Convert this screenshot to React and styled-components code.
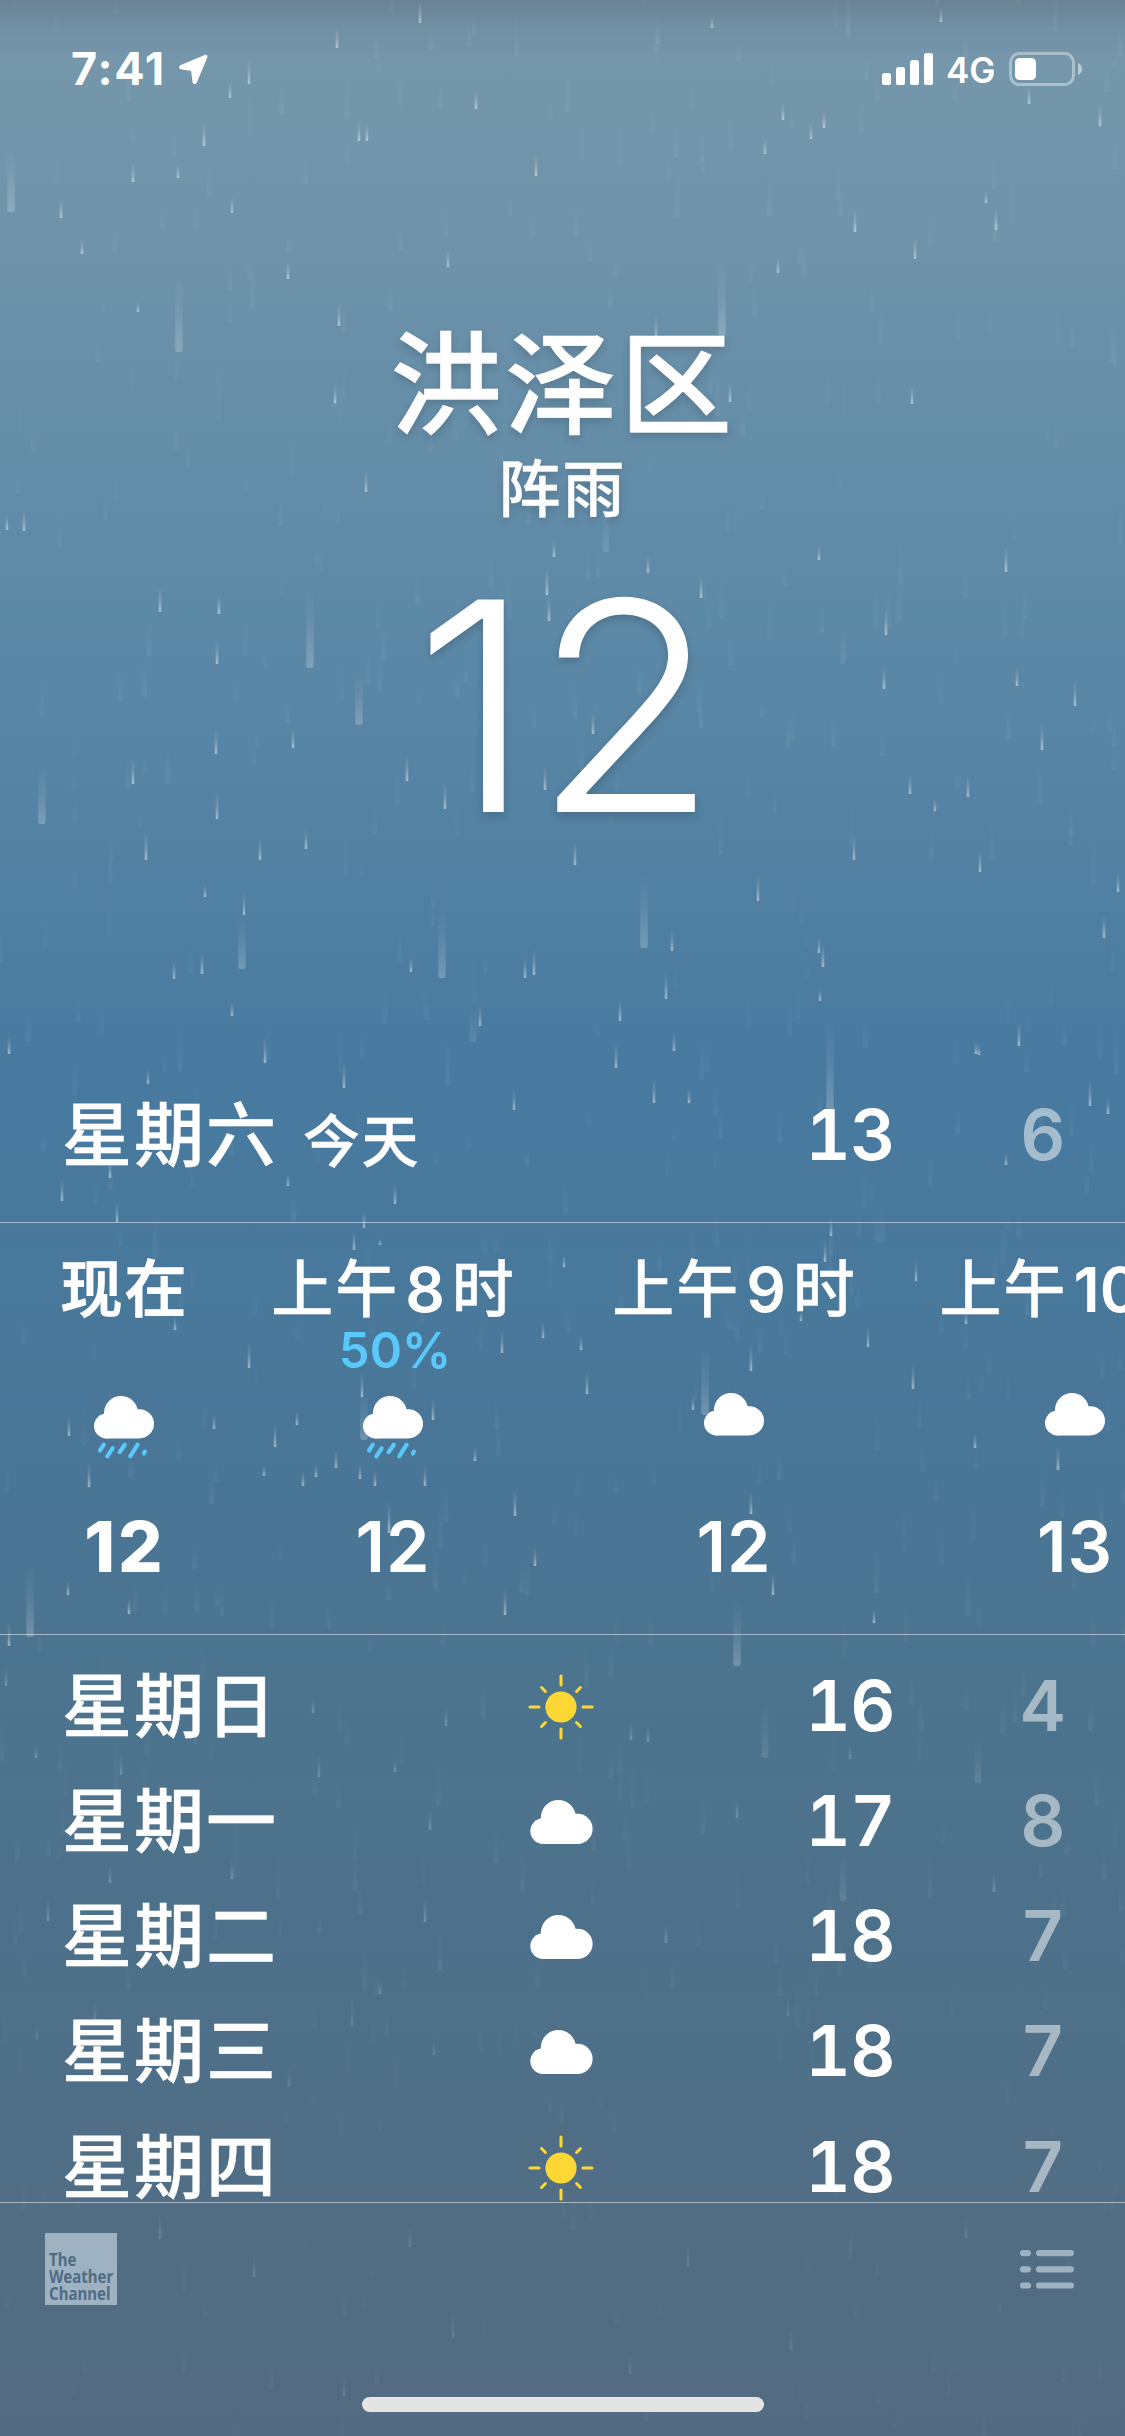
import React from "react";
import styled, { createGlobalStyle } from "styled-components";

const hours = [
   { period: "现在", icon: "rain", temp: 12, now: true },
   { period: "上午", hour: 8, unit: "时", chance: "50%", icon: "rain", temp: 12 },
   { period: "上午", hour: 9, unit: "时", icon: "cloud", temp: 12 },
   { period: "上午", hour: 10, unit: "时", icon: "cloud", temp: 13 },
];

const days = [
   { name: "星期日", icon: "sun", high: 16, low: 4 },
   { name: "星期一", icon: "cloud", high: 17, low: 8 },
   { name: "星期二", icon: "cloud", high: 18, low: 7 },
   { name: "星期三", icon: "cloud", high: 18, low: 7 },
   { name: "星期四", icon: "sun", high: 18, low: 7 },
];

// Big drops close to the camera: x, bottom y, length
const nearDrops = [
   [11, 212, 65], [179, 352, 75], [722, 336, 75], [310, 668, 80], [359, 725, 55],
   [42, 824, 60], [242, 969, 52], [442, 978, 70], [644, 948, 78], [830, 1112, 95],
   [364, 1440, 50], [705, 1415, 70], [30, 1637, 70], [737, 1666, 65],
   [765, 1758, 55], [978, 1783, 45], [843, 1901, 50], [606, 552, 40], [473, 1042, 40],
];

// Thin bright drops: x, bottom y, length
const brightDrops = [
   [420, 23, 22], [337, 48, 20], [712, 28, 12], [941, 22, 15], [249, 84, 24], [230, 98, 16],
   [476, 109, 18], [204, 146, 24], [359, 141, 20], [367, 141, 18], [536, 176, 22], [133, 182, 18],
   [61, 218, 20], [82, 254, 16], [783, 120, 16], [824, 128, 18], [811, 139, 15], [1100, 126, 22],
   [855, 232, 24], [996, 230, 22], [986, 203, 12], [915, 259, 22], [765, 154, 14], [339, 326, 22],
   [448, 267, 18], [288, 279, 18], [232, 213, 16], [1029, 104, 18], [778, 273, 16], [656, 340, 24],
   [178, 178, 14], [138, 312, 10], [730, 402, 20], [912, 404, 20], [24, 531, 20], [7, 530, 16],
   [366, 492, 22], [335, 403, 18], [160, 612, 26], [217, 664, 24], [219, 614, 20], [547, 595, 28],
   [549, 621, 24], [554, 557, 16], [701, 598, 24], [648, 573, 18], [1006, 572, 26], [819, 560, 14],
   [886, 635, 28], [884, 689, 22], [1075, 706, 26], [1042, 750, 26], [1017, 686, 18], [133, 784, 26],
   [216, 754, 24], [217, 819, 26], [293, 748, 20], [407, 781, 26], [445, 809, 26], [545, 790, 24],
   [593, 734, 22], [968, 797, 22], [910, 794, 20], [935, 811, 12], [146, 860, 28], [260, 860, 22],
   [306, 849, 20], [575, 865, 24], [854, 860, 24], [980, 872, 22], [758, 901, 26], [1104, 938, 24],
   [1118, 892, 20], [244, 915, 22], [205, 897, 12], [534, 975, 26], [525, 978, 20], [823, 967, 24],
   [819, 953, 16], [672, 951, 20], [666, 999, 26], [620, 1021, 22], [174, 979, 18], [202, 974, 22],
   [411, 972, 14], [232, 1016, 14], [480, 1026, 20], [820, 1001, 12], [265, 1063, 26], [344, 1088, 26],
   [616, 1068, 24], [1019, 1046, 24], [9, 1054, 18], [674, 1051, 18], [976, 1054, 12], [979, 1055, 10],
   [148, 1084, 14], [654, 1103, 24], [1090, 1106, 26], [1108, 1114, 16], [689, 1103, 14], [514, 1110, 20],
   [62, 1201, 22], [110, 1178, 18], [117, 1222, 20], [364, 1228, 16], [354, 1250, 18], [380, 1245, 6],
   [395, 1204, 20], [288, 1186, 12], [1006, 1165, 12], [831, 1236, 18], [825, 1262, 22], [916, 1281, 20],
   [564, 1267, 12], [502, 1353, 22], [543, 1338, 16], [249, 1368, 26], [175, 1330, 14], [69, 1436, 20],
   [89, 1487, 24], [275, 1447, 24], [362, 1397, 24], [389, 1533, 32], [515, 1516, 26], [505, 1615, 26],
   [425, 1486, 20], [375, 1486, 16], [316, 1477, 12], [336, 1468, 18], [303, 1486, 14], [264, 1476, 10],
   [360, 1479, 16], [214, 1429, 14], [297, 1425, 14], [433, 1420, 22], [475, 1461, 14], [535, 1566, 18],
   [129, 1614, 16], [68, 1595, 14], [9, 1646, 22], [751, 1371, 26], [751, 1514, 22], [587, 1394, 22],
   [868, 1347, 20], [913, 1389, 24], [773, 1595, 22], [966, 1324, 12], [975, 1448, 14], [1058, 1470, 24],
   [874, 1623, 14], [693, 1410, 14], [801, 1321, 10], [581, 1350, 14],
];

// Softer ones behind the lower list
const dimDrops = [
   [6, 1686, 20], [319, 1777, 22], [648, 1742, 18], [631, 1740, 20], [446, 1726, 22], [313, 1713, 16],
   [232, 1879, 20], [430, 1830, 22], [425, 1922, 26], [110, 1883, 18], [395, 1772, 14], [36, 1758, 14],
   [121, 1775, 20], [850, 1759, 14], [737, 1818, 20], [666, 1943, 20], [994, 1892, 20], [380, 1994, 12],
   [352, 2026, 30], [95, 2020, 20], [37, 2039, 16], [434, 2055, 18], [788, 2016, 18], [289, 2086, 20],
   [410, 2247, 22], [254, 2277, 26], [688, 2267, 24], [453, 2338, 26], [160, 2239, 26], [344, 2396, 20],
   [966, 2238, 24], [630, 2374, 20], [791, 2350, 20], [48, 1921, 24],
];

// Deterministic haze of barely visible drops
function makeHaze(count) {
   let seed = 41;
   const next = () => {
      seed = (seed * 16807) % 2147483647;
      return seed / 2147483647;
   };
   return Array.from({ length: count }, () => [
      next() * 1125,
      next() * 2450,
      22 + next() * 28,
      0.4 + next() * 0.6,
   ]);
}

const haze = makeHaze(620);

function Drops({ items, width, opacity }) {
   return items.map(([x, y, len, strength = 1], i) => (
      <rect
         key={i}
         x={x - width / 2}
         y={y - len}
         width={width}
         height={len}
         rx={width / 3}
         fill="url(#drop)"
         opacity={opacity * strength * (y > 2000 ? 0.6 : 1)}
      />
   ));
}

function Rain() {
   return (
      <RainLayer viewBox="0 0 1125 2436" aria-hidden="true">
         <defs>
            <linearGradient id="drop" x1="0" y1="0" x2="0" y2="1">
               <stop offset="0" stopColor="#fff" stopOpacity="0" />
               <stop offset="0.5" stopColor="#fff" stopOpacity="0.35" />
               <stop offset="1" stopColor="#fff" stopOpacity="1" />
            </linearGradient>
         </defs>
         <Drops items={haze} width={4.5} opacity={0.06} />
         <Drops items={nearDrops.slice(0, 14)} width={7.5} opacity={0.22} />
         <Drops items={nearDrops.slice(14)} width={6.5} opacity={0.11} />
         <Drops items={brightDrops} width={2.6} opacity={0.46} />
         <Drops items={dimDrops} width={2.6} opacity={0.22} />
      </RainLayer>
   );
}

function CloudShape() {
   return (
      <g fill="#fff">
         <circle cx="27" cy="17" r="17" />
         <circle cx="12.4" cy="30" r="12.4" />
         <circle cx="45.4" cy="27.8" r="14.6" />
         <path d="M12 22 L44 13.2 V42.4 H12 Z" />
      </g>
   );
}

function RainIcon() {
   return (
      <svg width="60" height="64" viewBox="0 0 60 64">
         <CloudShape />
         <g stroke="#5ac8fa" strokeWidth="4.2" strokeLinecap="round">
            <path d="M6 54.5 L9.8 48.7" />
            <path d="M13.3 60.3 L18.6 52.3" />
            <path d="M25.6 56.3 L30.8 48.7" />
            <path d="M36.2 60.3 L43.6 48.7" />
            <path d="M49.9 57.4 L50.9 55.6" />
         </g>
      </svg>
   );
}

function HourCloudIcon() {
   return (
      <svg width="60" height="64" viewBox="0 3 60 64" overflow="visible">
         <CloudShape />
      </svg>
   );
}

function DayCloudIcon() {
   return (
      <svg width="63" height="44" viewBox="0 0 60 42.4">
         <CloudShape />
      </svg>
   );
}

function SunIcon() {
   const rays = [0, 45, 90, 135, 180, 225, 270, 315];
   return (
      <svg width="66" height="66" viewBox="-33 -33 66 66">
         <circle r="15.6" fill="#fdd835" />
         <g stroke="#fdd835" strokeWidth="3" strokeLinecap="round">
            {rays.map((a) => (
               <path key={a} d={a % 90 ? "M0 -22 V-27.5" : "M0 -22 V-31"} transform={`rotate(${a})`} />
            ))}
         </g>
      </svg>
   );
}

function StatusIcons() {
   return (
      <StatusRight>
         <svg width="51" height="32" viewBox="0 0 51 32" fill="#fff">
            <rect x="0" y="20" width="9" height="12" rx="2.6" />
            <rect x="14" y="14" width="9" height="18" rx="2.6" />
            <rect x="28" y="7" width="9" height="25" rx="2.6" />
            <rect x="42" y="0" width="9" height="32" rx="2.6" />
         </svg>
         <Network>4G</Network>
         <svg width="74" height="34" viewBox="0 0 74 34">
            <rect x="1.5" y="1.5" width="63" height="31" rx="9" fill="none" stroke="#fff" strokeOpacity="0.4" strokeWidth="3" />
            <rect x="6" y="6" width="21" height="22" rx="4.5" fill="#fff" />
            <path d="M69 11 C71.5 12 73 14 73 17 C73 20 71.5 22 69 23 Z" fill="#fff" fillOpacity="0.5" />
         </svg>
      </StatusRight>
   );
}

function App() {
   return (
      <Screen>
         <GlobalStyle />
         <Rain />
         <StatusBar>
            <Clock>
               <Time>7:41</Time>
               <svg width="30" height="31" viewBox="0 0 30 31">
                  <path
                     d="M27.2 1.8 L2.6 12.2 Q1.4 13.2 2.8 14.2 L14 16 L15.6 28.4 Q16.6 29.8 17.8 28.4 L28.4 3.2 Q28.8 1.4 27.2 1.8 Z"
                     fill="#fff"
                     stroke="#fff"
                     strokeWidth="2"
                     strokeLinejoin="round"
                  />
               </svg>
            </Clock>
            <StatusIcons />
         </StatusBar>
         <Hero>
            <City>洪泽区</City>
            <Condition>阵雨</Condition>
            <Temperature>12</Temperature>
         </Hero>
         <Today>
            <DayName>星期六</DayName>
            <TodayTag>今天</TodayTag>
            <High>13</High>
            <Low>6</Low>
         </Today>
         <Hourly>
            {hours.map((h, i) => (
               <Hour key={i} $now={h.now}>
                  <HourLabel $now={h.now}>
                     {h.period}
                     {h.hour && <HourNumber>{h.hour}</HourNumber>}
                     {h.unit}
                  </HourLabel>
                  <Chance>{h.chance}</Chance>
                  <IconSlot>{h.icon === "rain" ? <RainIcon /> : <HourCloudIcon />}</IconSlot>
                  <HourTemp $now={h.now}>{h.temp}</HourTemp>
               </Hour>
            ))}
         </Hourly>
         <Daily>
            {days.map((d) => (
               <DayRow key={d.name}>
                  <DayName>{d.name}</DayName>
                  <DayIcon>{d.icon === "sun" ? <SunIcon /> : <DayCloudIcon />}</DayIcon>
                  <High>{d.high}</High>
                  <Low>{d.low}</Low>
               </DayRow>
            ))}
         </Daily>
         <Footer>
            <FooterBar>
               <ChannelLogo>
                  <ChannelName>The</ChannelName>
                  <ChannelName>Weather</ChannelName>
                  <ChannelName>Channel</ChannelName>
               </ChannelLogo>
               <svg width="54" height="39" viewBox="0 0 54 39" fill="#9fb2c1">
                  {[0, 16.2, 32.4].map((y) => (
                     <g key={y}>
                        <rect x="0" y={y} width="11" height="6.2" rx="3.1" />
                        <rect x="16" y={y} width="38" height="6.2" rx="3.1" />
                     </g>
                  ))}
               </svg>
            </FooterBar>
            <HomeIndicator />
         </Footer>
      </Screen>
   );
}

export default App;

const GlobalStyle = createGlobalStyle`
   * {
      box-sizing: border-box;
   }
   body {
      margin: 0;
   }
   svg {
      display: block;
      flex-shrink: 0;
   }
`;

const Screen = styled.div`
   position: relative;
   display: flex;
   flex-direction: column;
   width: 1125px;
   height: 2436px;
   overflow: hidden;
   color: #fff;
   font-family: Inter, "Noto Sans CJK SC", sans-serif;
   font-weight: 500;
   background: linear-gradient(
      #6a8294 0px,
      #7090a4 28px,
      #7596ab 60px,
      #7296ac 150px,
      #6a90a9 330px,
      #5f8ba8 560px,
      #5583a3 800px,
      #487aa0 1060px,
      #48799c 1240px,
      #4a7595 1520px,
      #4c748f 1680px,
      #4e7089 2020px,
      #536b80 2436px
   );
`;

const RainLayer = styled.svg`
   position: absolute;
   inset: 0;
   width: 100%;
   height: 100%;
`;

/* keeps the content above the rain */
const Layer = styled.div`
   position: relative;
   flex-shrink: 0;
`;

const StatusBar = styled(Layer)`
   display: flex;
   justify-content: space-between;
   align-items: center;
   height: 138px;
   padding: 0 42px 0 71px;
`;

const Clock = styled.div`
   display: flex;
   align-items: center;
`;

const Time = styled.span`
   width: 107px;
   font-size: 45px;
   font-weight: 700;
   line-height: 44px;
   letter-spacing: 1.8px;
`;

const StatusRight = styled.div`
   display: flex;
   align-items: center;
`;

const Network = styled.span`
   width: 51px;
   margin: 2px 12px 0 13px;
   font-size: 35px;
   font-weight: 600;
   line-height: 36px;
`;

const Hero = styled(Layer)`
   display: flex;
   flex-direction: column;
   align-items: center;
   height: 910px;
   padding-top: 191px;
   text-shadow: 0 4px 8px rgba(0, 0, 0, 0.16);
`;

const City = styled.h1`
   margin: 0;
   font-size: 112px;
   font-weight: 500;
   line-height: 112px;
   letter-spacing: 3px;
   -webkit-text-stroke: 0.6px #fff;
`;

const Condition = styled.div`
   margin-top: 18px;
   font-size: 62px;
   line-height: 62px;
   letter-spacing: 2px;
   -webkit-text-stroke: 0.4px #fff;
`;

const Temperature = styled.div`
   margin: 79px 0 0 7px;
   font-size: 292px;
   font-weight: 300;
   line-height: 212px;
   transform: scaleX(1.035);
`;

const Row = styled(Layer)`
   display: flex;
   align-items: center;
   padding: 0 60px 0 62px;
`;

const Today = styled(Row)`
   height: 175px;
   border-bottom: 1px solid rgba(255, 255, 255, 0.5);
`;

const DayName = styled.div`
   margin-top: 2px;
   font-size: 70px;
   line-height: 72px;
   letter-spacing: 2px;
   -webkit-text-stroke: 0.4px #fff;
`;

const TodayTag = styled.div`
   margin: 13px 0 0 25px;
   font-size: 57px;
   line-height: 60px;
   letter-spacing: 1.5px;
   -webkit-text-stroke: 0.4px #fff;
`;

const High = styled.div`
   width: 100px;
   margin-left: auto;
   font-size: 70px;
   font-weight: 600;
   font-variant-numeric: tabular-nums;
   line-height: 72px;
   letter-spacing: -0.6px;
   text-align: right;
`;

const Low = styled(High)`
   width: 170px;
   margin-left: 0;
   opacity: 0.5;
`;

const Hourly = styled(Layer)`
   display: flex;
   height: 412px;
   padding: 36px 0 0 25px;
   overflow: hidden;
   border-bottom: 1px solid rgba(255, 255, 255, 0.5);
`;

const Hour = styled.div`
   display: flex;
   flex-direction: column;
   flex-shrink: 0;
   align-items: center;
   width: ${(p) => (p.$now ? "197px" : "341px")};
`;

const HourLabel = styled.div`
   padding-left: 2px;
   font-size: 62px;
   line-height: 62px;
   letter-spacing: 2px;
   white-space: nowrap;
   -webkit-text-stroke: ${(p) => (p.$now ? "1.3px" : "0.4px")} #fff;
`;

const HourNumber = styled.span`
   margin: 0 7px 0 6px;
   font-weight: 600;
   letter-spacing: 0;
   -webkit-text-stroke: 0;
`;

const Chance = styled.div`
   height: 49px;
   margin-top: 5px;
   padding-left: 5px;
   color: #5ac8fa;
   font-size: 49px;
   font-weight: 600;
   line-height: 49px;
`;

const IconSlot = styled.div`
   display: flex;
   align-items: center;
   height: 106px;
`;

const HourTemp = styled.div`
   margin-top: 31px;
   padding-left: ${(p) => (p.$now ? "3px" : "1px")};
   font-size: 70px;
   font-weight: ${(p) => (p.$now ? 800 : 600)};
   line-height: 70px;
   letter-spacing: ${(p) => (p.$now ? "3px" : "1px")};
`;

const Daily = styled(Layer)`
   height: 567px;
   padding-top: 13px;
   overflow: hidden;
`;

const DayRow = styled(Row)`
   height: 115.25px;
`;

const DayIcon = styled.div`
   display: flex;
   justify-content: center;
   width: 66px;
   margin: 2px 0 0 250px;
`;

const Footer = styled(Layer)`
   display: flex;
   flex-direction: column;
   align-items: center;
   height: 234px;
   border-top: 1px solid rgba(255, 255, 255, 0.5);
`;

const FooterBar = styled.div`
   display: flex;
   justify-content: space-between;
   align-items: center;
   width: 100%;
   padding: 30px 51px 0 45px;
`;

const ChannelLogo = styled.div`
   display: flex;
   flex-direction: column;
   justify-content: flex-end;
   width: 72px;
   height: 72px;
   padding: 0 0 3px 4px;
   background: #9fb2c1;
`;

const ChannelName = styled.span`
   color: #4f6d84;
   font-family: "Noto Sans", sans-serif;
   font-size: 17.5px;
   font-weight: 700;
   line-height: 17px;
   transform: scaleX(0.86);
   transform-origin: left;
`;

const HomeIndicator = styled.div`
   width: 402px;
   height: 15px;
   margin-top: 92px;
   border-radius: 8px;
   background: #e4e4e5;
`;
